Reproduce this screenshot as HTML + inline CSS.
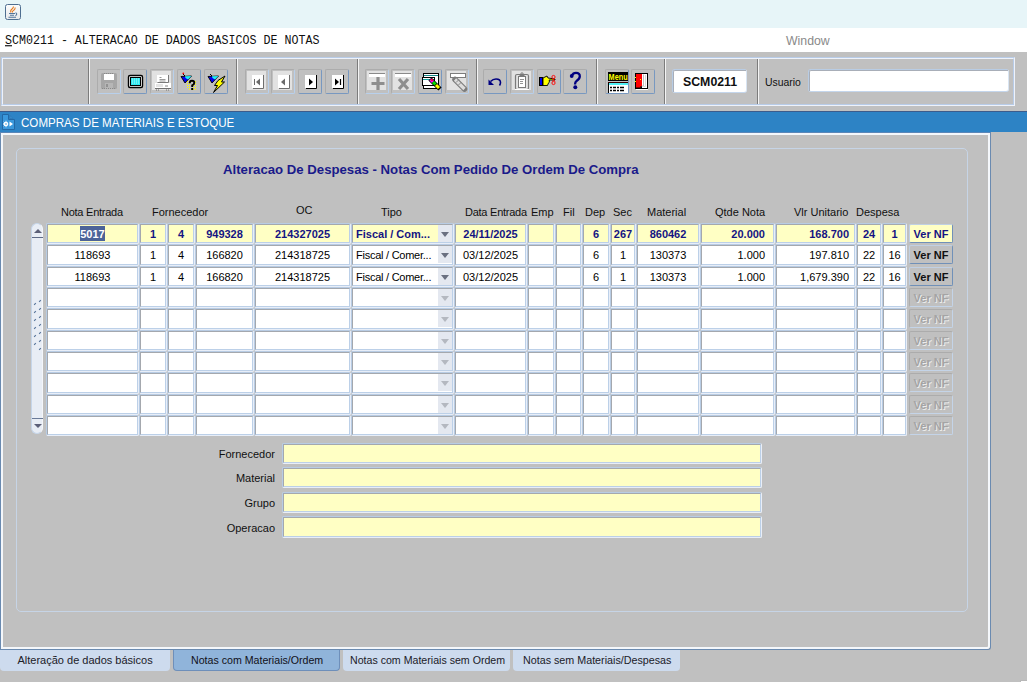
<!DOCTYPE html>
<html><head><meta charset="utf-8">
<style>
*{margin:0;padding:0;box-sizing:border-box}
html,body{width:1027px;height:682px;overflow:hidden;background:#c0c0c0;font-family:"Liberation Sans",sans-serif;position:relative}
.a{position:absolute}
#topbar{left:0;top:0;width:1027px;height:28px;background:#e7f5f8}
#titlebar{left:0;top:28px;width:1027px;height:24px;background:#fff}
#title{left:5px;top:34px;font-family:"Liberation Mono",monospace;font-size:11.65px;transform-origin:0 10px;transform:scaleY(1.16);color:#101010;white-space:pre}
#win{left:786px;top:34px;font-size:12.3px;color:#8a8a8a}
#tb{left:1px;top:57px;width:1014px;height:49px;border:1px solid #b8cce8;border-right-color:#eef2fa;border-bottom-color:#eef2fa}
#tb::before{content:"";position:absolute;left:0;top:0;right:0;bottom:0;border:1px solid #eef2fa;border-right-color:#b8cce8;border-bottom-color:#b8cce8}
.sep{top:59px;width:2px;height:45px;border-left:1px solid #7c7c7c;border-right:1px solid #f4f4f4}
.btn{top:69px;width:24px;height:25px;border:1px solid #acacac;border-right-color:#7898c0;border-bottom-color:#7898c0;border-radius:2px}
.btn.dis{border-right-color:#b8d0ec;border-bottom-color:#b8d0ec}
.btn.lt{border-right-color:#b8d0ec;border-bottom-color:#b8d0ec}
.btn.lt::before{content:"";position:absolute;left:1px;top:1px;width:19px;height:19px;background:#e2e2e2}
.btn svg{position:absolute;left:-1px;top:-1px}
.sel{background:#4b6398;color:#fff;padding:2px 0 1px}
.dd{position:absolute;right:1px;top:1px;width:14px;height:17px;background:#e4e8f0}
.dd::after{content:"";position:absolute;left:3px;top:7px;border-left:4px solid transparent;border-right:4px solid transparent;border-top:5px solid #6a7080}
#bluebar{left:0;top:111px;width:1027px;height:21px;background:#2d83c5;border-top:1px solid #3c5c8c}
#bbtext{left:21px;top:116px;font-size:12.4px;color:#fff;transform-origin:0 0;transform:scaleX(0.935)}
#main{left:0;top:133px;width:991px;height:516px;border-left:1px solid #6c8ab0;border-bottom:1px solid #6c8ab0}
#maininner{left:1px;top:133px;width:989px;height:515px;border:2px solid #fafcfe;border-top-width:2px;border-right:2px solid #fafcfe;border-bottom:1px solid #fafcfe;border-left:2px solid #fafcfe}
#mainright{left:990px;top:135px;width:1px;height:513px;background:#6c8ab0}
#inner{left:16px;top:148px;width:952px;height:464px;border:1px solid #c6d4e6;border-radius:5px}
#h1{left:223px;top:162px;font-size:13.2px;font-weight:bold;color:#1a1a8a;white-space:nowrap}
.hd{top:206px;font-size:11px;color:#101010;white-space:nowrap}
.c{height:21px;border-top:1px solid #b8cce4;border-left:1px solid #b8cce4;border-right:1px solid #e8eef8;border-bottom:1px solid #e8eef8;background:#fff;border-radius:2px}
.c::before{content:"";position:absolute;left:0;top:0;right:0;bottom:0;border-top:1px solid #a4a8ae;border-left:1px solid #a4a8ae;border-right:1px solid #bcd0e8;border-bottom:1px solid #bcd0e8}
.c span{position:absolute;left:0;right:0;top:4px;font-size:11px;color:#000;text-align:center;white-space:nowrap}
.c.y{background:#ffffc4}
.c.y span{font-weight:bold;color:#141482}
.c.r span{text-align:right;left:auto}
.vnf{height:19px;width:44px;left:909px;border:1px solid #c0d0e4;border-right-color:#7090b8;border-bottom-color:#7090b8;border-radius:2px;font-size:11px;font-weight:bold;text-align:center;line-height:19px;color:#101010}
.vnf.y{background:#ffffc4;color:#141482}
.vnf.dis{color:#a4a4a4;border-color:#acacac #c4d4e8 #c4d4e8 #acacac;text-shadow:1px 1px 0 #ececec}
.lbl{font-size:11px;color:#101010;text-align:right;width:80px;left:195px}
.fld{left:282px;width:480px;height:21px;background:#ffffc4;border-top:1px solid #b8cce4;border-left:1px solid #b8cce4;border-right:1px solid #e8eef8;border-bottom:1px solid #e8eef8;border-radius:2px}
.fld::before{content:"";position:absolute;left:0;top:0;right:0;bottom:0;border-top:1px solid #a4a8ae;border-left:1px solid #a4a8ae;border-right:1px solid #bcd0e8;border-bottom:1px solid #bcd0e8}
.tab{top:650px;height:21px;background:#cddbee;border-radius:0 0 4px 4px;font-size:11px;color:#202028;line-height:20px;white-space:nowrap}
.tab span{position:absolute;top:0;left:0;transform-origin:0 0}
.tab.act{background:#90b4da;border:1px solid #6e8fba;border-top:none;color:#101018}
.tf{background:#fff;border:1px solid #b8cce4;border-right-color:#d8e4f2;border-bottom-color:#c4d6ec;border-radius:3px}
.tf::before{content:"";position:absolute;left:0;top:0;right:0;bottom:0;border-top:1px solid #a8aeb8;border-left:1px solid #a8aeb8;border-radius:2px 0 0 0}
.dd.e::after{border-top-color:#b4b8c0}
</style></head><body>
<div id="topbar" class="a"></div>
<svg class="a" style="left:5px;top:4px" width="16" height="16" viewBox="0 0 16 16">
<defs><linearGradient id="jg" x1="0" y1="0" x2="0" y2="1"><stop offset="0" stop-color="#fcfcfc"/><stop offset="1" stop-color="#e6e8ea"/></linearGradient></defs>
<rect x="0.5" y="0.5" width="15" height="15" rx="2" fill="url(#jg)" stroke="#4e6e90"/>
<path d="M6 8.5 Q5 6.5 7 5 Q8.5 3.8 8.5 2.5 M7.5 8.5 Q7 7 9 6 Q10.5 5 10 3.5" stroke="#e87a1c" stroke-width="1.1" fill="none"/>
<path d="M4 9.5h6M5 11.3h4M3.5 13.3h7.5" stroke="#53759a" stroke-width="1.1"/>
<path d="M10.5 8.8 Q13 9.5 10.5 11.8" stroke="#53759a" stroke-width="1.1" fill="none"/>
</svg>
<div id="titlebar" class="a"></div>
<div id="title" class="a"><u>S</u>CM0211 - ALTERACAO DE DADOS BASICOS DE NOTAS</div>
<div id="win" class="a">Window</div>

<div id="tb" class="a"></div>
<div class="a sep" style="left:88px"></div>
<div class="a sep" style="left:236px"></div>
<div class="a sep" style="left:357px"></div>
<div class="a sep" style="left:476px"></div>
<div class="a sep" style="left:596px"></div>
<div class="a sep" style="left:664px"></div>
<div class="a sep" style="left:757px"></div>
<div class="a btn dis" style="left:97px"><svg width="24" height="25" viewBox="0 0 24 25"><rect x="4" y="4" width="16" height="16" rx="1.5" fill="#a6a6a6"/>
<rect x="7" y="5" width="10" height="6" fill="#fff"/>
<path d="M7 4.5h10" stroke="#888" stroke-dasharray="1 1"/>
<rect x="8" y="14" width="8" height="6" fill="#b6b6b6"/><rect x="9" y="15" width="2" height="3" fill="#929292"/>
<path d="M5 19.5h14" stroke="#8a8a8a" stroke-dasharray="1 1"/></svg></div>
<div class="a btn en" style="left:123px"><svg width="24" height="25" viewBox="0 0 24 25"><rect x="5.5" y="6.5" width="14" height="12" rx="1.5" fill="#fff" stroke="#000" stroke-width="1.4"/>
<rect x="7.5" y="8.5" width="10" height="8" fill="#2ee8f0" stroke="#000" stroke-width="1"/>
<path d="M9 10h7M9 12h7M9 14h7" stroke="#d8f8f8" stroke-width="0.8" stroke-dasharray="1 1"/></svg></div>
<div class="a btn lt" style="left:150px"><svg width="24" height="25" viewBox="0 0 24 25"><rect x="7" y="6" width="12" height="7" fill="#fff"/>
<path d="M18.5 6v7.5H7.5" stroke="#7a7a7a" fill="none"/>
<path d="M9.5 8.5h2M9.5 10.5h6M9.5 12h6" stroke="#808080" stroke-width="0.8"/>
<rect x="5" y="14" width="16" height="5" fill="#fff"/><rect x="6" y="15" width="7" height="3" fill="#e4e4e4"/>
<path d="M15 17h3" stroke="#888"/>
<path d="M5 19.5h16M6.5 20.5v1M8.5 20.5v1M16.5 20.5v1M18.5 20.5v1" stroke="#707070"/></svg></div>
<div class="a btn en" style="left:177px"><svg width="24" height="25" viewBox="0 0 24 25"><path d="M4 7.5 L14.5 7 L8 14 Z" fill="#0000f0" stroke="#000" stroke-width="0.9"/>
<path d="M8 7.2 L14.5 7 L11 10.5 L8.5 9 Z" fill="#20f0f0"/>
<path d="M6 5l2 2" stroke="#000"/><circle cx="6.3" cy="4.3" r="0.9" fill="#f00"/>
<g fill="#ffff00"><rect x="10" y="12" width="1" height="1"/><rect x="10" y="14" width="1" height="1"/><rect x="10" y="16" width="1" height="1"/><rect x="10" y="18" width="1" height="1"/><rect x="12" y="20" width="1" height="1"/><rect x="14" y="20" width="1" height="1"/><rect x="16" y="20" width="1" height="1"/><rect x="18" y="20" width="1" height="1"/><rect x="18" y="12" width="1" height="1"/><rect x="18" y="14" width="1" height="1"/><rect x="18" y="16" width="1" height="1"/><rect x="18" y="18" width="1" height="1"/><rect x="16" y="14" width="1" height="1"/><rect x="16" y="16" width="1" height="1"/><rect x="12" y="14" width="1" height="1"/><rect x="12" y="16" width="1" height="1"/><rect x="12" y="12" width="1" height="1"/><rect x="16" y="12" width="1" height="1"/><rect x="14" y="12" width="1" height="1"/><rect x="12" y="18" width="1" height="1"/><rect x="16" y="18" width="1" height="1"/></g>
<path d="M12.7 14.2 Q12.7 11.8 15 11.8 Q17.3 11.8 17.3 13.8 Q17.3 15.4 15.2 16.4 L15.2 18" stroke="#000" stroke-width="1.9" fill="none"/>
<rect x="14.2" y="19" width="2" height="2" fill="#000"/></svg></div>
<div class="a btn en" style="left:204px"><svg width="24" height="25" viewBox="0 0 24 25"><path d="M4 7.5 L14.5 7 L8 14 Z" fill="#0000f0" stroke="#000" stroke-width="0.9"/>
<path d="M8 7.2 L14.5 7 L11 10.5 L8.5 9 Z" fill="#20f0f0"/>
<path d="M6 5l2 2" stroke="#000"/><path d="M14 11.5 L21 7 L17.5 13 L20.5 13 L9.5 23.5 L13.5 16.5 L10.5 16.5 Z" fill="#ffff00" stroke="#000" stroke-width="1"/></svg></div>
<div class="a btn lt" style="left:245px"><svg width="24" height="25" viewBox="0 0 24 25"><rect x="7" y="6" width="11" height="13" fill="#fff"/><path d="M18.5 6v13.5H8" stroke="#6e6e6e" fill="none" stroke-width="1"/><path d="M9.5 10v6" stroke="#6a6a6a" stroke-width="1"/><path d="M15 9.5v7l-4-3.5z" fill="#6a6a6a"/></svg></div>
<div class="a btn lt" style="left:271px"><svg width="24" height="25" viewBox="0 0 24 25"><rect x="7" y="6" width="11" height="13" fill="#fff"/><path d="M18.5 6v13.5H8" stroke="#6e6e6e" fill="none" stroke-width="1"/><path d="M14 9.5v7l-4-3.5z" fill="#6a6a6a"/></svg></div>
<div class="a btn en" style="left:298px"><svg width="24" height="25" viewBox="0 0 24 25"><rect x="7" y="6" width="11" height="13" fill="#fff"/><path d="M18.5 6v13.5H8" stroke="#000" fill="none" stroke-width="1"/><path d="M11 9.5v7l4-3.5z" fill="#000"/></svg></div>
<div class="a btn en" style="left:325px"><svg width="24" height="25" viewBox="0 0 24 25"><rect x="7" y="6" width="11" height="13" fill="#fff"/><path d="M18.5 6v13.5H8" stroke="#000" fill="none" stroke-width="1"/><path d="M10 9.5v7l4-3.5z" fill="#000"/><path d="M15.5 10v6" stroke="#000" stroke-width="1.2"/></svg></div>
<div class="a btn lt" style="left:365px"><svg width="24" height="25" viewBox="0 0 24 25"><rect x="4" y="4" width="16" height="4" fill="#fff"/><path d="M4 4.5h16" stroke="#8a8a8a"/><path d="M13 8v13M6.5 14.5h13" stroke="#8e8e8e" stroke-width="3.2"/></svg></div>
<div class="a btn lt" style="left:391px"><svg width="24" height="25" viewBox="0 0 24 25"><rect x="4" y="4" width="16" height="4" fill="#fff"/><path d="M4 4.5h16" stroke="#8a8a8a"/><path d="M8 10l9 10M17 10l-9 10" stroke="#8e8e8e" stroke-width="3.2"/></svg></div>
<div class="a btn en" style="left:418px"><svg width="24" height="25" viewBox="0 0 24 25"><rect x="5.5" y="4.5" width="15" height="15" fill="#fff" stroke="#000" stroke-width="1"/>
<path d="M6 6.5h14" stroke="#188888" stroke-width="1"/><rect x="4.5" y="8.5" width="12" height="8" fill="#fff" stroke="#000"/><path d="M5 10.5h11" stroke="#18a0a0"/>
<path d="M12 10 L22 20" stroke="#000" stroke-width="4.5"/>
<path d="M12.5 10.5 L15 13" stroke="#ff00ff" stroke-width="3"/><path d="M15 13 L17.5 15.5" stroke="#00e000" stroke-width="3"/><path d="M18 16 L21 19" stroke="#ffff00" stroke-width="3"/><circle cx="14" cy="11" r="1" fill="#f00"/></svg></div>
<div class="a btn lt" style="left:445px"><svg width="24" height="25" viewBox="0 0 24 25"><rect x="5.5" y="4.5" width="15" height="4" fill="#fff" stroke="#7c7c7c" stroke-width="1"/><path d="M10 10.5 L19.5 20" stroke="#7c7c7c" stroke-width="5.5" stroke-linecap="round"/><path d="M10 10.5 L19.5 20" stroke="#dcdcdc" stroke-width="3.2"/><path d="M11 13.5l3-3M13.5 16l3-3" stroke="#8a8a8a" stroke-width="1"/></svg></div>
<div class="a btn en" style="left:483px"><svg width="24" height="25" viewBox="0 0 24 25"><path d="M7.5 12.5 Q10 10 13 10 Q17.5 10 17.5 13.5 Q17.5 15 16.5 16.5" stroke="#000080" stroke-width="1.6" fill="none"/>
<path d="M5.5 10.5 L5.5 16 L11 16 Z" fill="#000080"/></svg></div>
<div class="a btn lt" style="left:510px"><svg width="24" height="25" viewBox="0 0 24 25"><rect x="5.5" y="5.5" width="13" height="15" rx="1.5" fill="none" stroke="#7a7a7a" stroke-width="1.2"/>
<rect x="8.5" y="7.5" width="7" height="11" fill="#fff" stroke="#7a7a7a"/><path d="M9.5 6.5h5" stroke="#7a7a7a" stroke-width="1.5"/><circle cx="12" cy="5" r="1.2" fill="none" stroke="#7a7a7a"/>
<path d="M10 10.5h4M10 12.5h3M10 14.5h3" stroke="#7a7a7a" stroke-width=".8"/><rect x="5" y="20" width="14" height="1" fill="#fff"/></svg></div>
<div class="a btn en" style="left:537px"><svg width="24" height="25" viewBox="0 0 24 25"><rect x="2.5" y="8.5" width="3" height="8" fill="#0000f0" stroke="#000"/>
<path d="M6 9 L10 7 L11 9 L18 10 L18 11 L12 11 L12.5 12 L12 13.5 L11 15 L10.5 16.5 L6 16.5 Z" fill="#ffff00" stroke="#000" stroke-width="0.9"/>
<circle cx="16.5" cy="8" r="1.6" fill="none" stroke="#f00" stroke-width="0.9"/><circle cx="16.5" cy="14" r="1.6" fill="none" stroke="#f00" stroke-width="0.9"/><path d="M16 9.5 L18 12.5 M17 9.5 L15.5 12.5" stroke="#f00" stroke-width="0.8"/></svg></div>
<div class="a btn en" style="left:563px"><svg width="24" height="25" viewBox="0 0 24 25"><path d="M9 6.5 Q10 3.8 13 3.8 Q16.8 3.8 16.8 7.3 Q16.8 9.8 13.8 11.8 Q12 13 12 15.5" stroke="#000080" stroke-width="2.3" fill="none"/>
<circle cx="8.7" cy="7" r="1.9" fill="#000080"/><circle cx="12.3" cy="18.3" r="2" fill="#000080"/></svg></div>
<div class="a btn en" style="left:605px"><svg width="24" height="25" viewBox="0 0 24 25"><rect x="3" y="3" width="20" height="9" fill="#000"/>
<text x="3.6" y="10.6" font-family="Liberation Sans" font-weight="bold" font-size="9.5" fill="#ffff00" textLength="19" lengthAdjust="spacingAndGlyphs">Menu</text>
<rect x="3" y="14" width="20" height="10" fill="#fff"/><path d="M3.5 13v11" stroke="#000"/><path d="M4 15h19" stroke="#00e8f0" stroke-width="1.4"/><path d="M3 13.5h20" stroke="#300" stroke-width="1"/>
<path d="M5 18.5h2M8 18.5h3M12 18.5h2M15 18.5h4M5 21.5h2M8 21.5h3M12 21.5h2M15 21.5h4" stroke="#000" stroke-width="1.3"/></svg></div>
<div class="a btn en" style="left:631px"><svg width="24" height="25" viewBox="0 0 24 25"><rect x="4" y="4" width="13" height="16" fill="#000"/><rect x="11" y="5" width="5" height="14" fill="#fff"/><path d="M12.5 5.5v11.5h-2" stroke="#c0c0c0" fill="none"/><path d="M14.5 6v11.5h-3" stroke="#d8d8d8" fill="none"/>
<path d="M5 5 H11 V17 L9.5 17 L9.5 18.5 H5 Z" fill="#ff0000"/><rect x="9" y="10" width="1" height="1" fill="#ff0"/><rect x="4" y="8" width="1" height="1" fill="#ff0"/><rect x="4" y="12" width="1" height="1" fill="#ff0"/>
<rect x="5" y="20" width="12" height="1" fill="#fff"/></svg></div>

<div class="a tf" style="left:672px;top:69px;width:75px;height:24px"><span style="position:absolute;left:10px;top:4px;font-size:13.5px;font-weight:bold;color:#101010;transform-origin:0 0;transform:scaleX(0.913)">SCM0211</span></div>
<div class="a" style="left:765px;top:76px;font-size:11px;color:#101010;transform-origin:0 0;transform:scaleX(0.947)">Usuario</div>
<div class="a tf" style="left:808px;top:69px;width:201px;height:23px"></div>

<div id="bluebar" class="a"></div>
<svg class="a" style="left:2px;top:114px" width="13" height="16" viewBox="0 0 13 16">
<path d="M0.5 0.5h6v5h6v10h-12z" fill="#3a98dc" stroke="#2268a6"/>
<path d="M8 1.5 L11 4.5 H8 Z" fill="#3c90d0" stroke="#2a72b0" stroke-width=".6"/>
<circle cx="4" cy="10" r="2.3" fill="#fff"/><circle cx="4" cy="10" r="0.8" fill="#3a98dc"/>
<path d="M4 6.8v1M4 12.2v1M1 10h1M1.8 7.8l.8.8M1.8 12.2l.8-.8" stroke="#fff" stroke-width="1"/>
<path d="M7.5 7.5 L11 10 L7.5 12.5 Z" fill="#fff"/>
</svg>
<div id="bbtext" class="a">COMPRAS DE MATERIAIS E ESTOQUE</div>

<div class="a" style="left:0;top:132px;width:991px;height:518px;border:1px solid #6a8ab0;border-top-color:#5a86b8;border-radius:0 0 3px 0"></div>
<div class="a" style="left:1px;top:133px;width:989px;height:516px;border:2px solid #f4f7fb;border-radius:0 0 3px 0"></div>
<div id="inner" class="a"></div>

<div id="h1" class="a">Alteracao De Despesas - Notas Com Pedido De Ordem De Compra</div>
<div class="a hd" style="left:61px;letter-spacing:-0.25px">Nota Entrada</div>
<div class="a hd" style="left:152px">Fornecedor</div>
<div class="a hd" style="left:296px;top:204px">OC</div>
<div class="a hd" style="left:381px">Tipo</div>
<div class="a hd" style="left:465px;letter-spacing:-0.25px">Data Entrada</div>
<div class="a hd" style="left:531px">Emp</div>
<div class="a hd" style="left:563px">Fil</div>
<div class="a hd" style="left:585px">Dep</div>
<div class="a hd" style="left:613px">Sec</div>
<div class="a hd" style="left:647px">Material</div>
<div class="a hd" style="left:715px">Qtde Nota</div>
<div class="a hd" style="left:794px">Vlr Unitario</div>
<div class="a hd" style="left:856px">Despesa</div>
<div class="a" style="left:31px;top:223px;width:12px;height:211px;background:#e8edf5;border:1px solid #c6d6ea;border-radius:6px;border-right-color:#f4f6fa"></div>
<div class="a" style="left:34px;top:229px;width:0;height:0;border-left:4px solid transparent;border-right:4px solid transparent;border-bottom:4px solid #5c6078"></div>
<div class="a" style="left:32px;top:237px;width:11px;height:1px;background:#5e6a86"></div>
<div class="a" style="left:32px;top:418px;width:11px;height:1px;background:#6a7a98"></div>
<div class="a" style="left:34px;top:424px;width:0;height:0;border-left:4px solid transparent;border-right:4px solid transparent;border-top:4px solid #5c6078"></div>
<svg class="a" style="left:31px;top:296px" width="12" height="56"><g stroke="#56749a" stroke-width="1.1" stroke-linecap="square"><path d="M8.5 5.5l1-1" /><path d="M8.5 13.5l1-1" /><path d="M8.5 21.5l1-1" /><path d="M8.5 29.5l1-1" /><path d="M8.5 37.5l1-1" /><path d="M8.5 45.5l1-1" /><path d="M8.5 53.5l1-1" /><path d="M3.5 8.5l1-1" /><path d="M3.5 16.5l1-1" /><path d="M3.5 24.5l1-1" /><path d="M3.5 32.5l1-1" /><path d="M3.5 40.5l1-1" /><path d="M3.5 48.5l1-1" /></g></svg>
<div class="a c y" style="left:46px;top:223px;width:93px;height:21px"><span><b class="sel">5017</b></span></div>
<div class="a c y" style="left:139px;top:223px;width:28px;height:21px"><span>1</span></div>
<div class="a c y" style="left:167px;top:223px;width:28px;height:21px"><span>4</span></div>
<div class="a c y" style="left:195px;top:223px;width:59px;height:21px"><span>949328</span></div>
<div class="a c y" style="left:254px;top:223px;width:97px;height:21px"><span>214327025</span></div>
<div class="a c y cb" style="left:351px;top:223px;width:103px;height:21px"><i class="dd"></i><span style="text-align:left;left:4px">Fiscal / Com...</span></div>
<div class="a c y" style="left:454px;top:223px;width:73px;height:21px"><span>24/11/2025</span></div>
<div class="a c y" style="left:527px;top:223px;width:28px;height:21px"></div>
<div class="a c y" style="left:555px;top:223px;width:27px;height:21px"></div>
<div class="a c y" style="left:582px;top:223px;width:28px;height:21px"><span>6</span></div>
<div class="a c y" style="left:610px;top:223px;width:26px;height:21px"><span>267</span></div>
<div class="a c y" style="left:636px;top:223px;width:64px;height:21px"><span>860462</span></div>
<div class="a c y r" style="left:700px;top:223px;width:75px;height:21px"><span style="right:9px">20.000</span></div>
<div class="a c y r" style="left:775px;top:223px;width:81px;height:21px"><span style="right:6px">168.700</span></div>
<div class="a c y" style="left:856px;top:223px;width:26px;height:21px"><span>24</span></div>
<div class="a c y" style="left:882px;top:223px;width:25px;height:21px"><span>1</span></div>
<div class="a vnf y" style="top:224px">Ver NF</div>
<div class="a c" style="left:46px;top:244px;width:93px;height:22px"><span>118693</span></div>
<div class="a c" style="left:139px;top:244px;width:28px;height:22px"><span>1</span></div>
<div class="a c" style="left:167px;top:244px;width:28px;height:22px"><span>4</span></div>
<div class="a c" style="left:195px;top:244px;width:59px;height:22px"><span>166820</span></div>
<div class="a c" style="left:254px;top:244px;width:97px;height:22px"><span>214318725</span></div>
<div class="a c cb" style="left:351px;top:244px;width:103px;height:22px"><i class="dd"></i><span style="text-align:left;left:4px;letter-spacing:-0.25px">Fiscal / Comer...</span></div>
<div class="a c" style="left:454px;top:244px;width:73px;height:22px"><span>03/12/2025</span></div>
<div class="a c" style="left:527px;top:244px;width:28px;height:22px"></div>
<div class="a c" style="left:555px;top:244px;width:27px;height:22px"></div>
<div class="a c" style="left:582px;top:244px;width:28px;height:22px"><span>6</span></div>
<div class="a c" style="left:610px;top:244px;width:26px;height:22px"><span>1</span></div>
<div class="a c" style="left:636px;top:244px;width:64px;height:22px"><span>130373</span></div>
<div class="a c r" style="left:700px;top:244px;width:75px;height:22px"><span style="right:9px">1.000</span></div>
<div class="a c r" style="left:775px;top:244px;width:81px;height:22px"><span style="right:6px">197.810</span></div>
<div class="a c" style="left:856px;top:244px;width:26px;height:22px"><span>22</span></div>
<div class="a c" style="left:882px;top:244px;width:25px;height:22px"><span>16</span></div>
<div class="a vnf" style="top:245px">Ver NF</div>
<div class="a c" style="left:46px;top:266px;width:93px;height:21px"><span>118693</span></div>
<div class="a c" style="left:139px;top:266px;width:28px;height:21px"><span>1</span></div>
<div class="a c" style="left:167px;top:266px;width:28px;height:21px"><span>4</span></div>
<div class="a c" style="left:195px;top:266px;width:59px;height:21px"><span>166820</span></div>
<div class="a c" style="left:254px;top:266px;width:97px;height:21px"><span>214318725</span></div>
<div class="a c cb" style="left:351px;top:266px;width:103px;height:21px"><i class="dd"></i><span style="text-align:left;left:4px;letter-spacing:-0.25px">Fiscal / Comer...</span></div>
<div class="a c" style="left:454px;top:266px;width:73px;height:21px"><span>03/12/2025</span></div>
<div class="a c" style="left:527px;top:266px;width:28px;height:21px"></div>
<div class="a c" style="left:555px;top:266px;width:27px;height:21px"></div>
<div class="a c" style="left:582px;top:266px;width:28px;height:21px"><span>6</span></div>
<div class="a c" style="left:610px;top:266px;width:26px;height:21px"><span>1</span></div>
<div class="a c" style="left:636px;top:266px;width:64px;height:21px"><span>130373</span></div>
<div class="a c r" style="left:700px;top:266px;width:75px;height:21px"><span style="right:9px">1.000</span></div>
<div class="a c r" style="left:775px;top:266px;width:81px;height:21px"><span style="right:6px">1,679.390</span></div>
<div class="a c" style="left:856px;top:266px;width:26px;height:21px"><span>22</span></div>
<div class="a c" style="left:882px;top:266px;width:25px;height:21px"><span>16</span></div>
<div class="a vnf" style="top:267px">Ver NF</div>
<div class="a c" style="left:46px;top:287px;width:93px;height:21px"></div>
<div class="a c" style="left:139px;top:287px;width:28px;height:21px"></div>
<div class="a c" style="left:167px;top:287px;width:28px;height:21px"></div>
<div class="a c" style="left:195px;top:287px;width:59px;height:21px"></div>
<div class="a c" style="left:254px;top:287px;width:97px;height:21px"></div>
<div class="a c cb" style="left:351px;top:287px;width:103px;height:21px"><i class="dd e"></i></div>
<div class="a c" style="left:454px;top:287px;width:73px;height:21px"></div>
<div class="a c" style="left:527px;top:287px;width:28px;height:21px"></div>
<div class="a c" style="left:555px;top:287px;width:27px;height:21px"></div>
<div class="a c" style="left:582px;top:287px;width:28px;height:21px"></div>
<div class="a c" style="left:610px;top:287px;width:26px;height:21px"></div>
<div class="a c" style="left:636px;top:287px;width:64px;height:21px"></div>
<div class="a c r" style="left:700px;top:287px;width:75px;height:21px"></div>
<div class="a c r" style="left:775px;top:287px;width:81px;height:21px"></div>
<div class="a c" style="left:856px;top:287px;width:26px;height:21px"></div>
<div class="a c" style="left:882px;top:287px;width:25px;height:21px"></div>
<div class="a vnf dis" style="top:288px">Ver NF</div>
<div class="a c" style="left:46px;top:308px;width:93px;height:22px"></div>
<div class="a c" style="left:139px;top:308px;width:28px;height:22px"></div>
<div class="a c" style="left:167px;top:308px;width:28px;height:22px"></div>
<div class="a c" style="left:195px;top:308px;width:59px;height:22px"></div>
<div class="a c" style="left:254px;top:308px;width:97px;height:22px"></div>
<div class="a c cb" style="left:351px;top:308px;width:103px;height:22px"><i class="dd e"></i></div>
<div class="a c" style="left:454px;top:308px;width:73px;height:22px"></div>
<div class="a c" style="left:527px;top:308px;width:28px;height:22px"></div>
<div class="a c" style="left:555px;top:308px;width:27px;height:22px"></div>
<div class="a c" style="left:582px;top:308px;width:28px;height:22px"></div>
<div class="a c" style="left:610px;top:308px;width:26px;height:22px"></div>
<div class="a c" style="left:636px;top:308px;width:64px;height:22px"></div>
<div class="a c r" style="left:700px;top:308px;width:75px;height:22px"></div>
<div class="a c r" style="left:775px;top:308px;width:81px;height:22px"></div>
<div class="a c" style="left:856px;top:308px;width:26px;height:22px"></div>
<div class="a c" style="left:882px;top:308px;width:25px;height:22px"></div>
<div class="a vnf dis" style="top:309px">Ver NF</div>
<div class="a c" style="left:46px;top:330px;width:93px;height:21px"></div>
<div class="a c" style="left:139px;top:330px;width:28px;height:21px"></div>
<div class="a c" style="left:167px;top:330px;width:28px;height:21px"></div>
<div class="a c" style="left:195px;top:330px;width:59px;height:21px"></div>
<div class="a c" style="left:254px;top:330px;width:97px;height:21px"></div>
<div class="a c cb" style="left:351px;top:330px;width:103px;height:21px"><i class="dd e"></i></div>
<div class="a c" style="left:454px;top:330px;width:73px;height:21px"></div>
<div class="a c" style="left:527px;top:330px;width:28px;height:21px"></div>
<div class="a c" style="left:555px;top:330px;width:27px;height:21px"></div>
<div class="a c" style="left:582px;top:330px;width:28px;height:21px"></div>
<div class="a c" style="left:610px;top:330px;width:26px;height:21px"></div>
<div class="a c" style="left:636px;top:330px;width:64px;height:21px"></div>
<div class="a c r" style="left:700px;top:330px;width:75px;height:21px"></div>
<div class="a c r" style="left:775px;top:330px;width:81px;height:21px"></div>
<div class="a c" style="left:856px;top:330px;width:26px;height:21px"></div>
<div class="a c" style="left:882px;top:330px;width:25px;height:21px"></div>
<div class="a vnf dis" style="top:331px">Ver NF</div>
<div class="a c" style="left:46px;top:351px;width:93px;height:21px"></div>
<div class="a c" style="left:139px;top:351px;width:28px;height:21px"></div>
<div class="a c" style="left:167px;top:351px;width:28px;height:21px"></div>
<div class="a c" style="left:195px;top:351px;width:59px;height:21px"></div>
<div class="a c" style="left:254px;top:351px;width:97px;height:21px"></div>
<div class="a c cb" style="left:351px;top:351px;width:103px;height:21px"><i class="dd e"></i></div>
<div class="a c" style="left:454px;top:351px;width:73px;height:21px"></div>
<div class="a c" style="left:527px;top:351px;width:28px;height:21px"></div>
<div class="a c" style="left:555px;top:351px;width:27px;height:21px"></div>
<div class="a c" style="left:582px;top:351px;width:28px;height:21px"></div>
<div class="a c" style="left:610px;top:351px;width:26px;height:21px"></div>
<div class="a c" style="left:636px;top:351px;width:64px;height:21px"></div>
<div class="a c r" style="left:700px;top:351px;width:75px;height:21px"></div>
<div class="a c r" style="left:775px;top:351px;width:81px;height:21px"></div>
<div class="a c" style="left:856px;top:351px;width:26px;height:21px"></div>
<div class="a c" style="left:882px;top:351px;width:25px;height:21px"></div>
<div class="a vnf dis" style="top:352px">Ver NF</div>
<div class="a c" style="left:46px;top:372px;width:93px;height:22px"></div>
<div class="a c" style="left:139px;top:372px;width:28px;height:22px"></div>
<div class="a c" style="left:167px;top:372px;width:28px;height:22px"></div>
<div class="a c" style="left:195px;top:372px;width:59px;height:22px"></div>
<div class="a c" style="left:254px;top:372px;width:97px;height:22px"></div>
<div class="a c cb" style="left:351px;top:372px;width:103px;height:22px"><i class="dd e"></i></div>
<div class="a c" style="left:454px;top:372px;width:73px;height:22px"></div>
<div class="a c" style="left:527px;top:372px;width:28px;height:22px"></div>
<div class="a c" style="left:555px;top:372px;width:27px;height:22px"></div>
<div class="a c" style="left:582px;top:372px;width:28px;height:22px"></div>
<div class="a c" style="left:610px;top:372px;width:26px;height:22px"></div>
<div class="a c" style="left:636px;top:372px;width:64px;height:22px"></div>
<div class="a c r" style="left:700px;top:372px;width:75px;height:22px"></div>
<div class="a c r" style="left:775px;top:372px;width:81px;height:22px"></div>
<div class="a c" style="left:856px;top:372px;width:26px;height:22px"></div>
<div class="a c" style="left:882px;top:372px;width:25px;height:22px"></div>
<div class="a vnf dis" style="top:373px">Ver NF</div>
<div class="a c" style="left:46px;top:394px;width:93px;height:21px"></div>
<div class="a c" style="left:139px;top:394px;width:28px;height:21px"></div>
<div class="a c" style="left:167px;top:394px;width:28px;height:21px"></div>
<div class="a c" style="left:195px;top:394px;width:59px;height:21px"></div>
<div class="a c" style="left:254px;top:394px;width:97px;height:21px"></div>
<div class="a c cb" style="left:351px;top:394px;width:103px;height:21px"><i class="dd e"></i></div>
<div class="a c" style="left:454px;top:394px;width:73px;height:21px"></div>
<div class="a c" style="left:527px;top:394px;width:28px;height:21px"></div>
<div class="a c" style="left:555px;top:394px;width:27px;height:21px"></div>
<div class="a c" style="left:582px;top:394px;width:28px;height:21px"></div>
<div class="a c" style="left:610px;top:394px;width:26px;height:21px"></div>
<div class="a c" style="left:636px;top:394px;width:64px;height:21px"></div>
<div class="a c r" style="left:700px;top:394px;width:75px;height:21px"></div>
<div class="a c r" style="left:775px;top:394px;width:81px;height:21px"></div>
<div class="a c" style="left:856px;top:394px;width:26px;height:21px"></div>
<div class="a c" style="left:882px;top:394px;width:25px;height:21px"></div>
<div class="a vnf dis" style="top:395px">Ver NF</div>
<div class="a c" style="left:46px;top:415px;width:93px;height:21px"></div>
<div class="a c" style="left:139px;top:415px;width:28px;height:21px"></div>
<div class="a c" style="left:167px;top:415px;width:28px;height:21px"></div>
<div class="a c" style="left:195px;top:415px;width:59px;height:21px"></div>
<div class="a c" style="left:254px;top:415px;width:97px;height:21px"></div>
<div class="a c cb" style="left:351px;top:415px;width:103px;height:21px"><i class="dd e"></i></div>
<div class="a c" style="left:454px;top:415px;width:73px;height:21px"></div>
<div class="a c" style="left:527px;top:415px;width:28px;height:21px"></div>
<div class="a c" style="left:555px;top:415px;width:27px;height:21px"></div>
<div class="a c" style="left:582px;top:415px;width:28px;height:21px"></div>
<div class="a c" style="left:610px;top:415px;width:26px;height:21px"></div>
<div class="a c" style="left:636px;top:415px;width:64px;height:21px"></div>
<div class="a c r" style="left:700px;top:415px;width:75px;height:21px"></div>
<div class="a c r" style="left:775px;top:415px;width:81px;height:21px"></div>
<div class="a c" style="left:856px;top:415px;width:26px;height:21px"></div>
<div class="a c" style="left:882px;top:415px;width:25px;height:21px"></div>
<div class="a vnf dis" style="top:416px">Ver NF</div>
<div class="a lbl" style="top:448px">Fornecedor</div>
<div class="a fld" style="top:443px;height:21px"></div>
<div class="a lbl" style="top:472px">Material</div>
<div class="a fld" style="top:467px;height:21px"></div>
<div class="a lbl" style="top:497px">Grupo</div>
<div class="a fld" style="top:492px;height:21px"></div>
<div class="a lbl" style="top:522px">Operacao</div>
<div class="a fld" style="top:516px;height:22px"></div>
<div class="a tab" style="left:0px;width:170px"><span style="left:17.5px;transform:scaleX(1.0)">Alteração de dados básicos</span></div>
<div class="a tab act" style="left:173px;width:167px"><span style="left:16.80000000000001px;transform:scaleX(0.9656432748538011)">Notas com Materiais/Ordem</span></div>
<div class="a tab" style="left:343px;width:167px"><span style="left:7.199999999999989px;transform:scaleX(0.964508094645081)">Notas com Materiais sem Ordem</span></div>
<div class="a tab" style="left:513px;width:167px"><span style="left:9.799999999999955px;transform:scaleX(0.9751146037982974)">Notas sem Materiais/Despesas</span></div>
<div class="a" style="left:1020px;top:680px;width:7px;height:2px;background:#fff;border-top:1px solid #b8b8b8;border-left:1px solid #b8b8b8"></div>
</body></html>
